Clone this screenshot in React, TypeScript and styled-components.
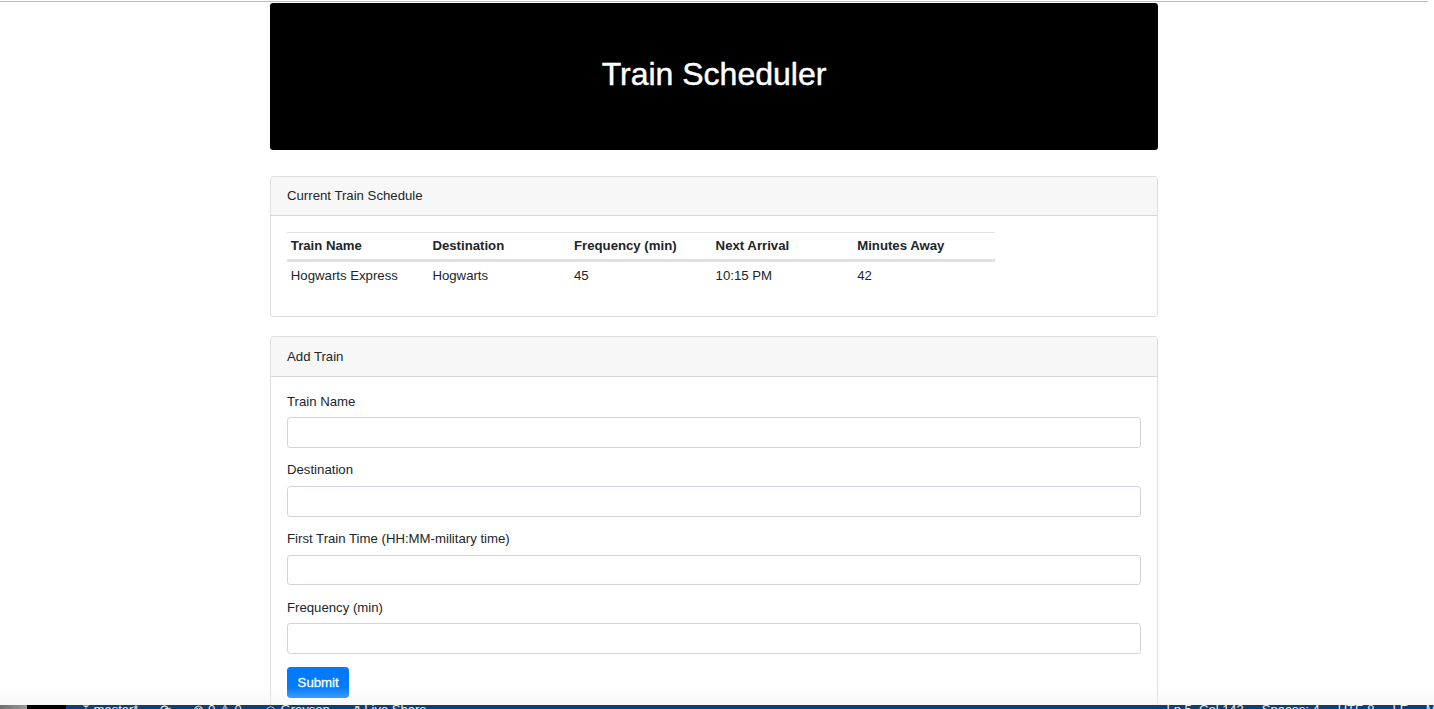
import React from "react";
import styled, { createGlobalStyle } from "styled-components";

const GlobalStyle = createGlobalStyle`
  html, body {
    margin: 0;
    padding: 0;
    overflow: hidden;
    background: #ffffff;
  }
  body {
    font-family: "Liberation Sans", Arial, Helvetica, sans-serif;
    font-size: 13.2px;
    line-height: 19.2px;
    color: #212529;
  }
  * { box-sizing: border-box; }
`;

const Page = styled.div`
  padding-right: 6px;
`;

const TopRule = styled.div`
  height: 1px;
  margin-top: 1px;
  background: #bdbdbd;
`;

const Container = styled.div`
  width: 888px;
  margin: 0 auto;
  padding-top: 1px;
`;

const Jumbotron = styled.header`
  background: #000000;
  border-radius: 3.2px;
  height: 147px;
  display: flex;
  align-items: center;
  justify-content: center;
  margin-bottom: 25.6px;
`;

const Title = styled.h1`
  margin: 0;
  color: #ffffff;
  font-size: 32px;
  line-height: 38.4px;
  font-weight: 400;
  -webkit-text-stroke: 0.45px #ffffff;
  padding-bottom: 4px;
`;

const Card = styled.section<{ $gap?: number }>`
  border: 1px solid rgba(0, 0, 0, 0.125);
  border-radius: 3.2px;
  margin-bottom: ${(p) => p.$gap ?? 0}px;
  overflow: hidden;
`;

const CardHeader = styled.div`
  background: #f7f7f7;
  border-bottom: 1px solid rgba(0, 0, 0, 0.125);
  padding: 9.5px 16px;
  line-height: 19.2px;
`;

const CardBody = styled.div<{ $pt?: number }>`
  padding: 16px;
  padding-top: ${(p) => p.$pt ?? 16}px;
`;

const Table = styled.table`
  width: 708px;
  border-collapse: separate;
  border-spacing: 0;
  margin-bottom: 12px;
`;

const Th = styled.th`
  text-align: left;
  font-weight: 700;
  padding: 3.6px 3.84px 3.4px;
  border-top: 1px solid #dee2e6;
  border-bottom: 2px solid #dee2e6;
  width: 20%;
  line-height: 19.2px;
`;

const Td = styled.td`
  padding: 3.6px 3.84px;
  border-top: 1px solid #dee2e6;
  line-height: 19.2px;
`;

const FormGroup = styled.div`
  margin-bottom: 12.6px;
`;

const Label = styled.label`
  display: block;
  margin-bottom: 6.2px;
  line-height: 19.2px;
`;

const Input = styled.input`
  display: block;
  width: 100%;
  height: 30.8px;
  padding: 4.8px 9.6px;
  border: 1px solid #ced4da;
  border-radius: 3.2px;
  font: inherit;
  color: #495057;
  background: #fff;
  outline: none;
`;

const Button = styled.button`
  display: inline-block;
  height: 30.8px;
  padding: 4.8px 9.6px;
  border: 1px solid #007bff;
  border-radius: 3.2px;
  background: #007bff;
  color: #ffffff;
  font: inherit;
  -webkit-text-stroke: 0.3px #ffffff;
  line-height: 19.2px;
  cursor: pointer;
`;

const WindowShade = styled.div`
  position: fixed;
  left: 0;
  right: 0;
  bottom: 4px;
  height: 18px;
  background: linear-gradient(to bottom, rgba(240, 240, 240, 0), rgba(238, 238, 238, 0.45));
  pointer-events: none;
`;

const StatusBar = styled.div`
  position: fixed;
  left: 0;
  right: 0;
  top: 705px;
  height: 22px;
  display: flex;
  background: #0f3f6e;
  overflow: hidden;
  font-family: "Liberation Sans", Arial, sans-serif;
  font-size: 13px;
  line-height: 13px;
  color: #e8eef5;
`;

const StatusSeg = styled.div<{ $w: number; $bg: string }>`
  width: ${(p) => p.$w}px;
  flex: none;
  background: ${(p) => p.$bg};
`;

const StatusItems = styled.div`
  flex: 1;
  display: flex;
  padding-left: 16px;
  margin-top: -2px;
`;

const StatusItem = styled.span<{ $ml: number }>`
  margin-left: ${(p) => p.$ml}px;
  white-space: nowrap;
`;

const rows = [
  { name: "Hogwarts Express", dest: "Hogwarts", freq: "45", next: "10:15 PM", away: "42" },
];

const fields = [
  "Train Name",
  "Destination",
  "First Train Time (HH:MM-military time)",
  "Frequency (min)",
];

export default function App() {
  return (
    <>
      <GlobalStyle />
      <Page>
        <TopRule />
        <Container>
          <Jumbotron>
            <Title>Train Scheduler</Title>
          </Jumbotron>

          <Card $gap={19}>
            <CardHeader>Current Train Schedule</CardHeader>
            <CardBody>
              <Table>
                <thead>
                  <tr>
                    <Th>Train Name</Th>
                    <Th>Destination</Th>
                    <Th>Frequency (min)</Th>
                    <Th>Next Arrival</Th>
                    <Th>Minutes Away</Th>
                  </tr>
                </thead>
                <tbody>
                  {rows.map((r) => (
                    <tr key={r.name}>
                      <Td>{r.name}</Td>
                      <Td>{r.dest}</Td>
                      <Td>{r.freq}</Td>
                      <Td>{r.next}</Td>
                      <Td>{r.away}</Td>
                    </tr>
                  ))}
                </tbody>
              </Table>
            </CardBody>
          </Card>

          <Card>
            <CardHeader>Add Train</CardHeader>
            <CardBody $pt={15}>
              {fields.map((f) => (
                <FormGroup key={f}>
                  <Label>{f}</Label>
                  <Input type="text" />
                </FormGroup>
              ))}
              <Button type="button">Submit</Button>
            </CardBody>
          </Card>
        </Container>
      </Page>
      <WindowShade />
      <StatusBar>
        <StatusSeg $w={27} $bg="linear-gradient(to right, #6e6e6e, #9a9a9a)" />
        <StatusSeg $w={39} $bg="#000000" />
        <StatusItems>
          <StatusItem $ml={0}>ᛘ master*</StatusItem>
          <StatusItem $ml={22}>⟳</StatusItem>
          <StatusItem $ml={22}>⊗ 0 ⚠ 0</StatusItem>
          <StatusItem $ml={22}>☺ Greyson</StatusItem>
          <StatusItem $ml={20}>⇗ Live Share</StatusItem>
          <StatusItem $ml={740}>Ln 5, Col 142</StatusItem>
          <StatusItem $ml={18}>Spaces: 4</StatusItem>
          <StatusItem $ml={18}>UTF-8</StatusItem>
          <StatusItem $ml={18}>LF</StatusItem>
          <StatusItem $ml={18}>Markdown</StatusItem>
        </StatusItems>
      </StatusBar>
    </>
  );
}
